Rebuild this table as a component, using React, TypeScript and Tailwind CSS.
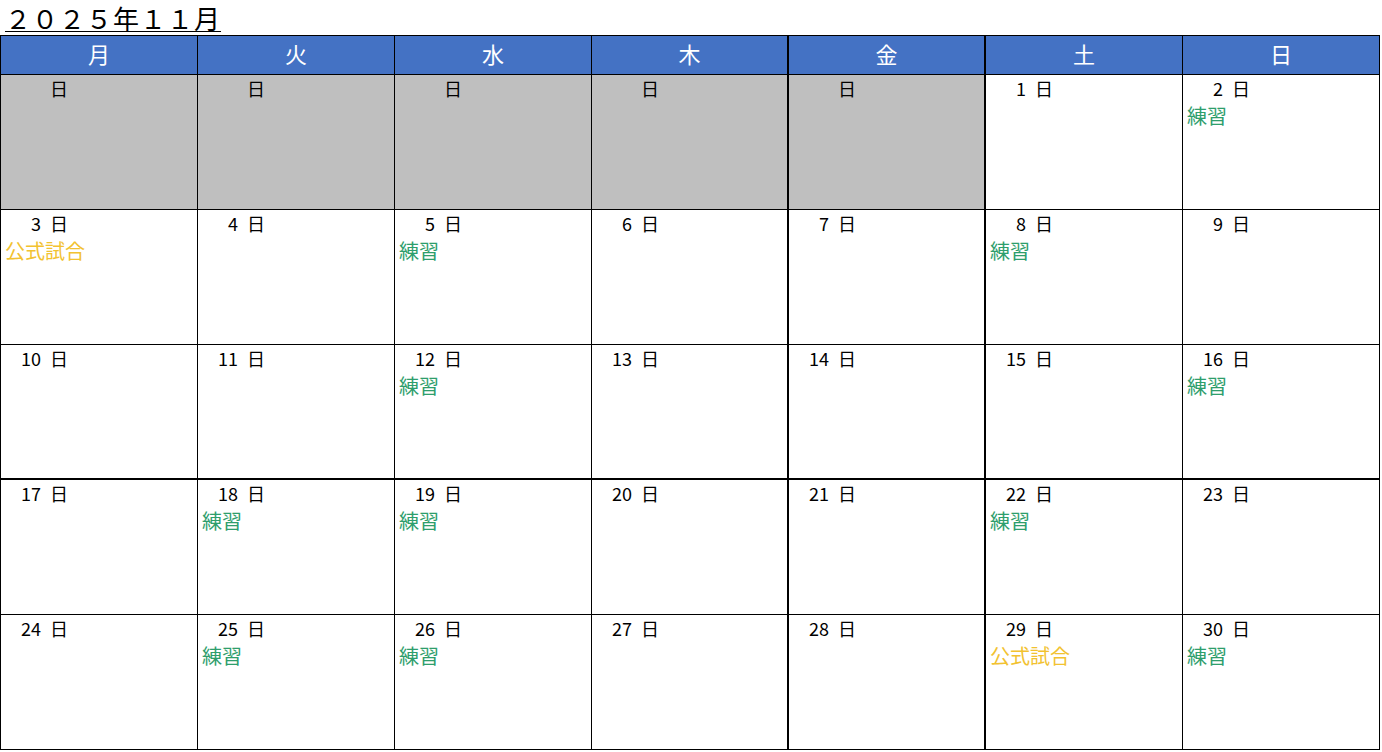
const weekdays = ["月", "火", "水", "木", "金", "土", "日"];

type Cell = { day: number | null; event?: "practice" | "match" };

const events: Record<number, "practice" | "match"> = {
  2: "practice",
  3: "match",
  5: "practice",
  8: "practice",
  12: "practice",
  16: "practice",
  18: "practice",
  19: "practice",
  22: "practice",
  25: "practice",
  26: "practice",
  29: "match",
  30: "practice",
};

// November 2025 starts on a Saturday
const cells: Cell[] = [];
for (let i = 0; i < 5; i++) cells.push({ day: null });
for (let d = 1; d <= 30; d++) cells.push({ day: d, event: events[d] });

const font = { fontFamily: '"Noto Sans CJK JP", "Noto Sans", sans-serif' };

function borderClass(col: number, row: number) {
  // thick lines between Thu/Fri and Fri/Sat, and below 3rd week
  const r = col === 3 || col === 4 ? "border-r-2" : "border-r";
  const b = row === 2 ? "border-b-2" : "border-b";
  return `${r} ${b}`;
}

export default function App() {
  const rows: Cell[][] = [];
  for (let i = 0; i < cells.length; i += 7) rows.push(cells.slice(i, i + 7));

  return (
    <div className="w-[1382px] h-[752px] bg-white text-black overflow-hidden" style={font}>
      <div className="h-[35px] pl-[5px] flex items-end">
        <span className="text-[26px] leading-[34px] underline underline-offset-[2px] decoration-1 tracking-[1px]">
          ２０２５年１１月
        </span>
      </div>
      <div className="w-[1380px] border-l border-t border-black">
        <div className="grid grid-cols-[197px_197px_197px_197px_197px_197px_197px] h-[39px] bg-[#4472C4]">
          {weekdays.map((w, i) => (
            <div
              key={w}
              className={`flex items-center justify-center pb-[4px] text-white text-[22px] border-b border-black ${
                i === 3 || i === 4 ? "border-r-2" : "border-r"
              }`}
            >
              {w}
            </div>
          ))}
        </div>
        {rows.map((row, ri) => (
          <div
            key={ri}
            className="grid grid-cols-[197px_197px_197px_197px_197px_197px_197px] h-[135px]"
          >
            {row.map((c, ci) => (
              <div
                key={ci}
                className={`border-black ${borderClass(ci, ri)} ${
                  c.day === null ? "bg-[#BFBFBF]" : "bg-white"
                }`}
              >
                <div className="flex pt-[1px] text-[18px] leading-[24px]">
                  <span className="w-[40px] text-right">{c.day ?? ""}</span>
                  <span className="ml-[9px]">日</span>
                </div>
                {c.event === "practice" && (
                  <div className="pl-[4px] pt-[4px] text-[20px] leading-[24px] text-[#2E9E6C]">練習</div>
                )}
                {c.event === "match" && (
                  <div className="pl-[4px] pt-[4px] text-[20px] leading-[24px] text-[#F2C230]">公式試合</div>
                )}
              </div>
            ))}
          </div>
        ))}
      </div>
    </div>
  );
}
